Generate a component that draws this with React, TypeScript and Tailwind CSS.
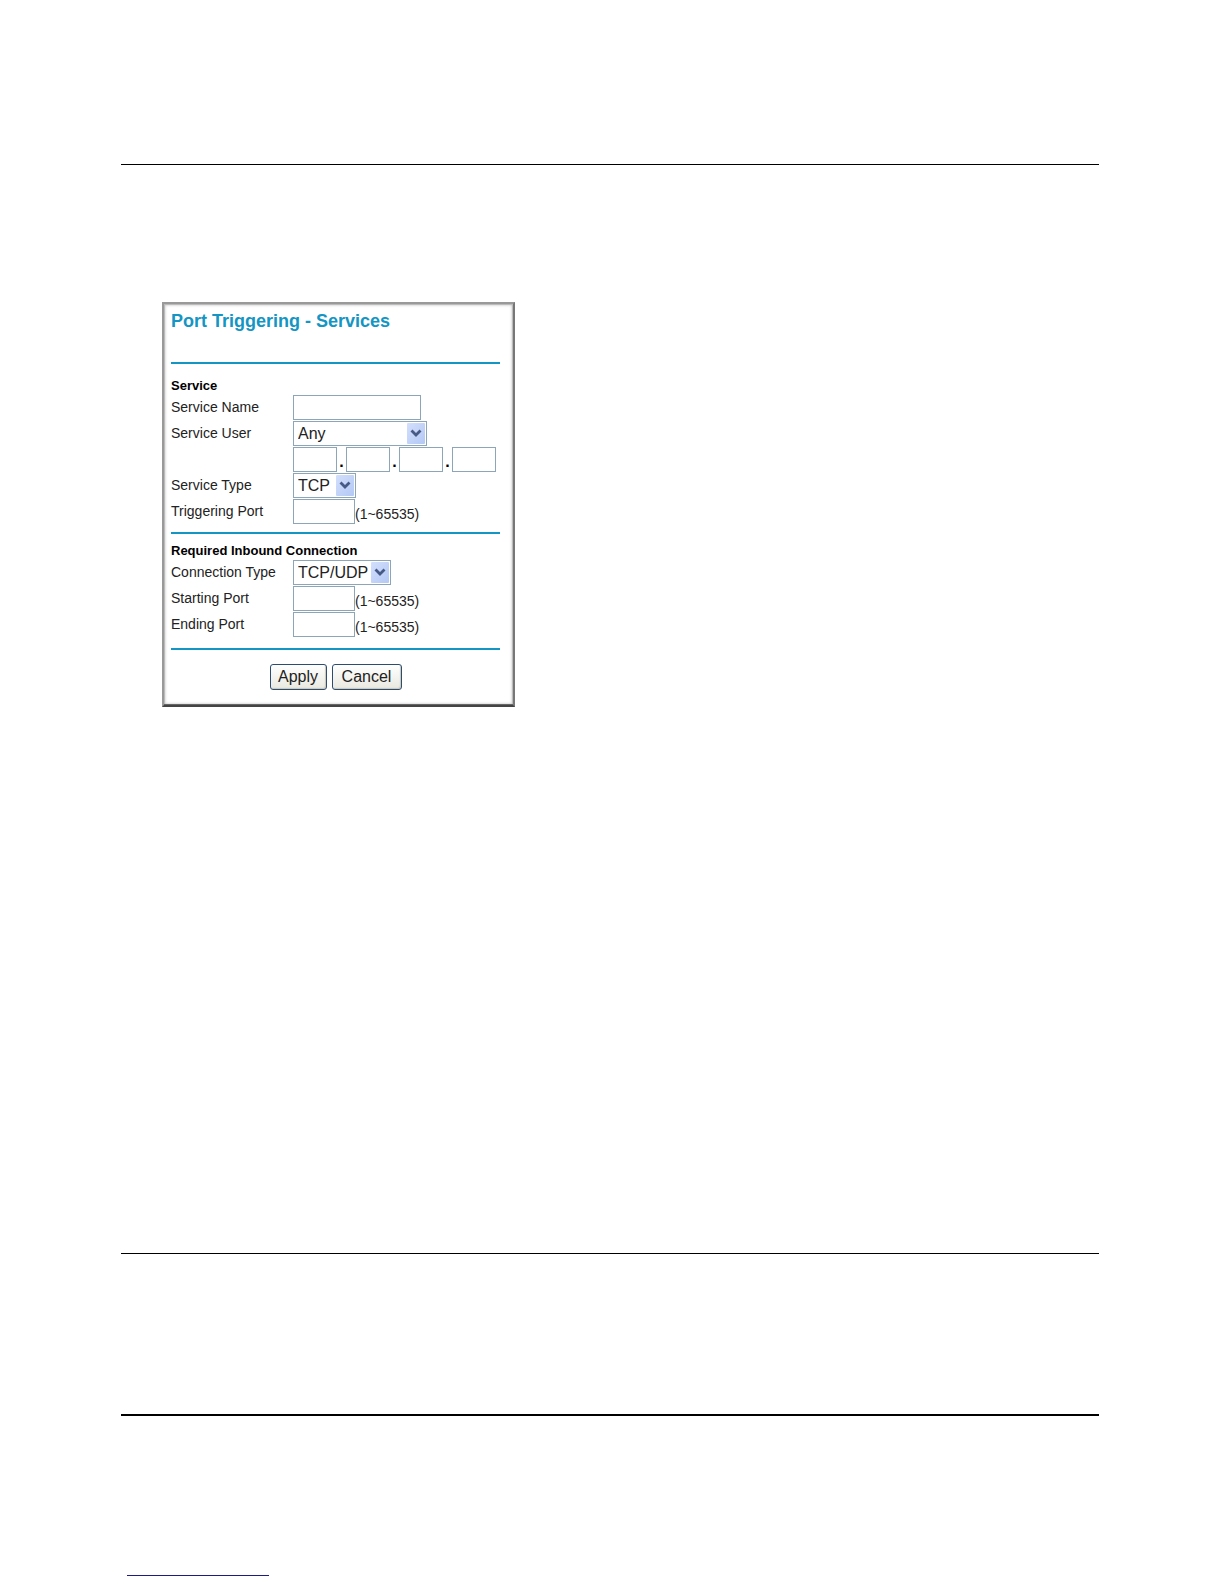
import React from 'react';

interface SelectBoxProps {
  id: string;
  options: string[];
  className: string;
}

// XP style drop-down: native select with the blue arrow tile laid over its right end
const SelectBox: React.FC<SelectBoxProps> = ({ id, options, className }) => (
  <div className={`relative h-[25px] ${className}`}>
    <select
      id={id}
      className="block w-full h-full appearance-none rounded-none border border-[#8da5b8] bg-white pl-1 text-base leading-5 text-[#222]"
    >
      {options.map(o => (
        <option key={o}>{o}</option>
      ))}
    </select>
    <svg
      className="absolute right-[2px] top-[2px] pointer-events-none"
      width="18"
      height="21"
      viewBox="0 0 18 21"
      aria-hidden="true"
    >
      <defs>
        <linearGradient id={`${id}-tile`} x1="0" y1="0" x2="1" y2="1">
          <stop offset="0" stopColor="#d3dffc" />
          <stop offset="1" stopColor="#b3c8f5" />
        </linearGradient>
      </defs>
      <rect width="18" height="21" rx="1" fill={`url(#${id}-tile)`} />
      <path d="M4.5 7.5l4.5 4.5 4.5-4.5" fill="none" stroke="#465a85" strokeWidth="2.8" />
    </svg>
  </div>
);

interface RowProps {
  label?: string;
  htmlFor?: string;
  children: React.ReactNode;
}

const Row: React.FC<RowProps> = ({ label, htmlFor, children }) => (
  <div className="flex h-[25px]">
    <div className="w-[122px] shrink-0">
      {label && (
        <label htmlFor={htmlFor} className="block leading-6">
          {label}
        </label>
      )}
    </div>
    {children}
  </div>
);

const inputClass = 'block h-[25px] border border-[#8da5b8] bg-white px-1 text-base';

const PortInput: React.FC<{ id: string }> = ({ id }) => (
  <>
    <input id={id} type="text" className={`${inputClass} w-[62px]`} />
    <span className="self-end leading-5">(1~65535)</span>
  </>
);

const Rule: React.FC = () => <hr className="mr-[13px] border-0 h-[2px] bg-[#1495c3]" />;

const buttonClass =
  'h-[26px] rounded-[3px] border border-[#2c4c72] bg-linear-to-b from-white to-[#e9e8e0] text-base leading-5 text-[#222] shadow-[inset_-1px_-1px_1px_#c9c7ba]';

const PortTriggering: React.FC = () => (
  <form
    onSubmit={e => e.preventDefault()}
    className="w-[353px] border-2 border-t-[#999] border-l-[#999] border-r-[#777] border-b-[#444] bg-white pl-[7px] pb-[15px] text-sm text-[#222] shadow-[inset_0_-1px_0_#666,inset_0_0_0_1px_#bbb,inset_0_0_3px_1px_#bbb]"
  >
    <h1 className="pt-[5px] pb-[29px] text-lg leading-6 font-bold text-[#1495c3]">Port Triggering - Services</h1>
    <Rule />

    <h2 className="pt-[13px] text-[13px] leading-[18px] font-bold text-black">Service</h2>
    <div className="flex flex-col gap-px pb-2">
      <Row label="Service Name" htmlFor="service-name">
        <input id="service-name" type="text" className={`${inputClass} w-[128px]`} />
      </Row>
      <Row label="Service User" htmlFor="service-user">
        <SelectBox id="service-user" options={['Any', 'Single address']} className="w-[134px]" />
      </Row>
      <Row>
        {[1, 2, 3, 4].map(n => (
          <React.Fragment key={n}>
            {n > 1 && <span className="w-[9px] self-end text-center text-base leading-5 font-bold text-black">.</span>}
            <input type="text" aria-label={`Address part ${n}`} className={`${inputClass} w-[44px]`} />
          </React.Fragment>
        ))}
      </Row>
      <Row label="Service Type" htmlFor="service-type">
        <SelectBox id="service-type" options={['TCP', 'UDP']} className="w-[63px]" />
      </Row>
      <Row label="Triggering Port" htmlFor="triggering-port">
        <PortInput id="triggering-port" />
      </Row>
    </div>
    <Rule />

    <h2 className="pt-2 text-[13px] leading-[18px] font-bold text-black">Required Inbound Connection</h2>
    <div className="flex flex-col gap-px pb-[11px]">
      <Row label="Connection Type" htmlFor="connection-type">
        <SelectBox id="connection-type" options={['TCP/UDP', 'TCP', 'UDP']} className="w-[98px]" />
      </Row>
      <Row label="Starting Port" htmlFor="starting-port">
        <PortInput id="starting-port" />
      </Row>
      <Row label="Ending Port" htmlFor="ending-port">
        <PortInput id="ending-port" />
      </Row>
    </div>
    <Rule />

    <div className="mr-[13px] flex justify-center gap-[5px] pt-[14px]">
      <button type="submit" className={`${buttonClass} w-[57px]`}>Apply</button>
      <button type="reset" className={`${buttonClass} w-[70px]`}>Cancel</button>
    </div>
  </form>
);

const App: React.FC = () => (
  <div className="bg-white pl-[121px] pr-[125px] pt-[164px] pb-2 font-['Liberation_Sans',Arial,sans-serif]">
    <main className="border-y border-black pt-[137px] pb-[546px] pl-[41px]">
      <PortTriggering />
    </main>
    <footer className="pt-40">
      <div className="h-[2px] bg-black" />
      <div className="mt-[159px] ml-[6px] w-[142px] h-px bg-[#1c1c84]" />
    </footer>
  </div>
);

export default App;
